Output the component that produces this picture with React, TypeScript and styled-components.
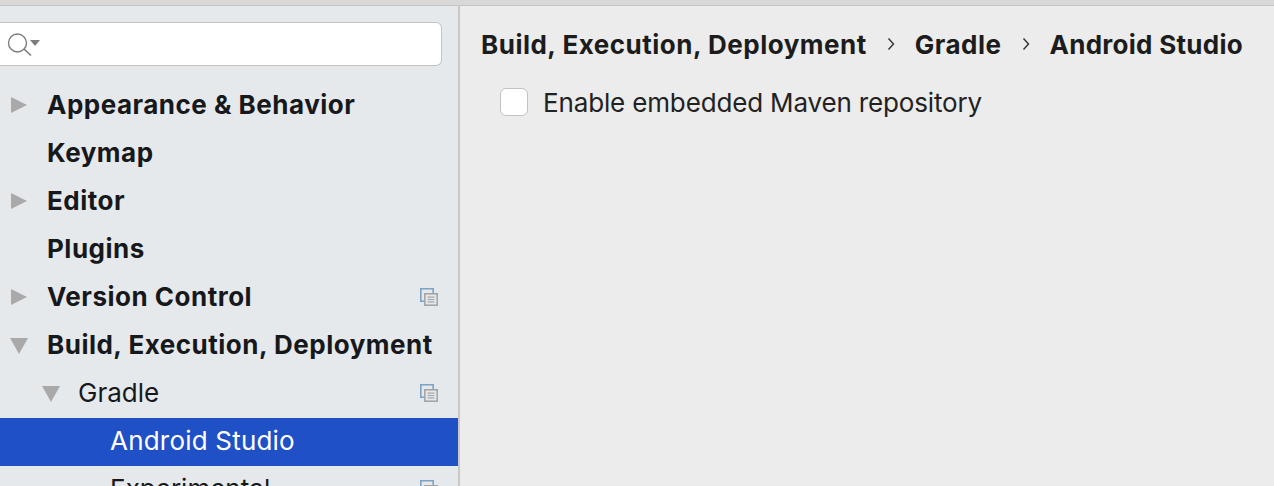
import React from 'react';
import styled, { createGlobalStyle } from 'styled-components';

const GlobalStyle = createGlobalStyle`
  html, body {
    margin: 0;
    padding: 0;
    overflow: hidden;
    background: #ececec;
    font-family: Inter, "Liberation Sans", sans-serif;
  }
`;

type TreeItem = {
  label: string;
  level: number;
  bold?: boolean;
  arrow?: 'right' | 'down';
  selected?: boolean;
  project?: boolean;
};

const items: TreeItem[] = [
  { label: 'Appearance & Behavior', level: 0, bold: true, arrow: 'right' },
  { label: 'Keymap', level: 0, bold: true },
  { label: 'Editor', level: 0, bold: true, arrow: 'right' },
  { label: 'Plugins', level: 0, bold: true },
  { label: 'Version Control', level: 0, bold: true, arrow: 'right', project: true },
  { label: 'Build, Execution, Deployment', level: 0, bold: true, arrow: 'down' },
  { label: 'Gradle', level: 1, arrow: 'down', project: true },
  { label: 'Android Studio', level: 2, selected: true },
  { label: 'Experimental', level: 2, project: true }
];

const SearchIcon = () => (
  <svg width="42" height="26" viewBox="0 0 42 26" fill="none">
    <circle cx="17.5" cy="12" r="9" stroke="#7d7d7d" strokeWidth="1.4" />
    <path d="M24 18l7 6.5" stroke="#7d7d7d" strokeWidth="1.7" />
    <path d="M30 9h10l-5 6z" fill="#7d7d7d" />
  </svg>
);

const Arrow = ({ direction }: { direction: 'right' | 'down' }) => (
  <svg width="18" height="18" viewBox="0 0 18 18">
    {direction === 'right'
      ? <path d="M1 1l16 8-16 8z" fill="#a9a9a9" />
      : <path d="M0 2h18l-9 16z" fill="#a9a9a9" />}
  </svg>
);

const ProjectIcon = () => (
  <svg width="18" height="18" viewBox="0 0 18 18" fill="none">
    <path d="M4 13.2H.8V.8h12.4V5" stroke="#7ba3c4" strokeWidth="1.6" />
    <rect x="4.8" y="5.8" width="12.4" height="11.4" stroke="#a5a5a5" strokeWidth="1.6" />
    <path d="M7.5 9.2h7M7.5 11.5h7M7.5 13.8h7" stroke="#a5a5a5" strokeWidth="1.2" />
  </svg>
);

const Separator = () => (
  <svg width="8" height="14" viewBox="0 0 8 14" fill="none">
    <path d="M1.5 1.5L6.5 7l-5 5.5" stroke="#333" strokeWidth="1.4" />
  </svg>
);

export default function App() {
  return (
    <Window>
      <GlobalStyle />
      <TopBar />
      <Body>
        <Sidebar>
          <SearchBox>
            <SearchIcon />
          </SearchBox>
          <Tree>
            {items.map(item => (
              <Row key={item.label} $level={item.level} $selected={item.selected}>
                <ArrowSlot>{item.arrow && <Arrow direction={item.arrow} />}</ArrowSlot>
                <RowLabel $bold={item.bold} $selected={item.selected}>{item.label}</RowLabel>
                {item.project && <ProjectSlot><ProjectIcon /></ProjectSlot>}
              </Row>
            ))}
          </Tree>
        </Sidebar>
        <Content>
          <Breadcrumbs>
            <Crumb>Build, Execution, Deployment</Crumb>
            <Separator />
            <Crumb>Gradle</Crumb>
            <Separator />
            <Crumb $tight>Android Studio</Crumb>
          </Breadcrumbs>
          <CheckRow>
            <CheckBox />
            <CheckLabel>Enable embedded Maven repository</CheckLabel>
          </CheckRow>
        </Content>
      </Body>
    </Window>
  );
}

const Window = styled.div`
  width: 1274px;
  height: 486px;
  display: flex;
  flex-direction: column;
  overflow: hidden;
  background: #ececec;
`;

const TopBar = styled.div`
  flex: none;
  height: 5px;
  background: #d8d8d8;
  border-bottom: 1px solid #c4c4c4;
`;

const Body = styled.div`
  flex: 1;
  min-height: 0;
  display: flex;
`;

const Sidebar = styled.div`
  flex: none;
  width: 458px;
  background: #e6e9ec;
  border-right: 2px solid #c8c8c8;
  overflow: hidden;
`;

const SearchBox = styled.div`
  box-sizing: border-box;
  width: 442px;
  height: 44px;
  margin: 16px 0 0;
  padding: 8px 0 0;
  background: #fff;
  border: 1px solid #c4c4c4;
  border-left: none;
  border-radius: 0 6px 6px 0;
`;

const Tree = styled.div`
  margin-top: 16px;
`;

const Row = styled.div<{ $level: number; $selected?: boolean }>`
  box-sizing: border-box;
  height: 48px;
  padding: 0 0 2px ${props => 10 + props.$level * 32}px;
  display: flex;
  align-items: center;
  background: ${props => (props.$selected ? '#1f50c6' : 'transparent')};
`;

const ArrowSlot = styled.div`
  flex: none;
  width: 36px;
  display: flex;
  align-items: center;
`;

const RowLabel = styled.span<{ $bold?: boolean; $selected?: boolean }>`
  flex: 1;
  margin-left: ${props => (props.$bold ? '1px' : '0')};
  font-size: 26px;
  line-height: 32px;
  white-space: nowrap;
  font-weight: ${props => (props.$bold ? 700 : 400)};
  letter-spacing: ${props => (props.$bold ? '0.5px' : props.$selected ? '0.2px' : '0')};
  color: ${props => (props.$selected ? '#fff' : '#16181b')};
`;

const ProjectSlot = styled.div`
  flex: none;
  display: flex;
  margin-right: 20px;
`;

const Content = styled.div`
  flex: 1;
  min-width: 0;
  padding: 21px 0 0 21px;
`;

const Breadcrumbs = styled.div`
  display: flex;
  align-items: center;
  gap: 20px;
  height: 34px;
`;

const Crumb = styled.span<{ $tight?: boolean }>`
  font-size: 26px;
  font-weight: 700;
  letter-spacing: ${props => (props.$tight ? '0.28px' : '0.5px')};
  white-space: nowrap;
  color: #1c1c1c;
`;

const CheckRow = styled.div`
  display: flex;
  align-items: center;
  gap: 15px;
  margin: 24px 0 0 19px;
`;

const CheckBox = styled.div`
  flex: none;
  box-sizing: border-box;
  width: 28px;
  height: 28px;
  background: #fff;
  border: 1px solid #c2c2c2;
  border-radius: 6px;
`;

const CheckLabel = styled.span`
  padding-top: 2px;
  font-size: 26px;
  line-height: 32px;
  letter-spacing: -0.15px;
  white-space: nowrap;
  color: #222;
`;
